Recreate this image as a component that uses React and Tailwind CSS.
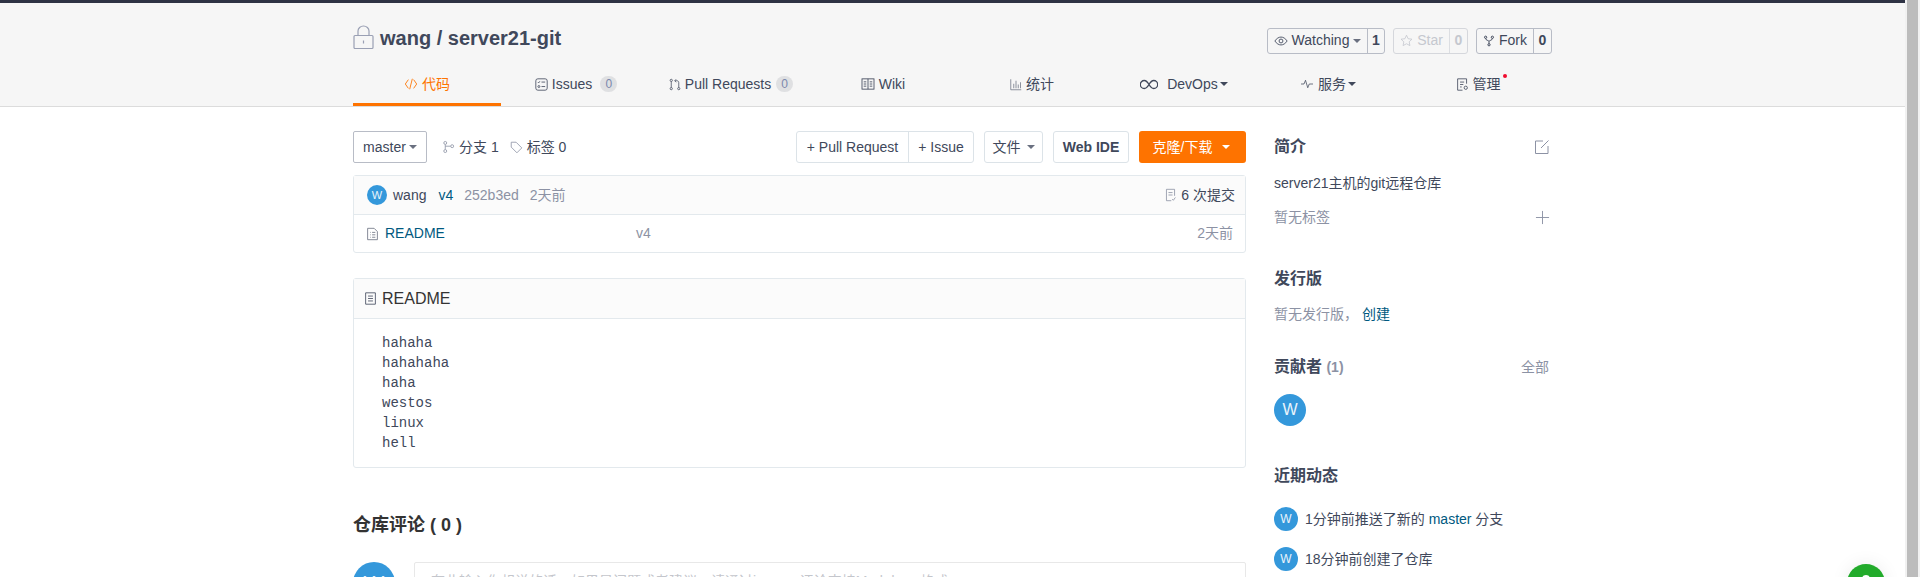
import React from "react";

const S = ({ className = "", w = 14, h = 14, vb = "0 0 16 16", children, color = "currentColor", sw = 1 }) => (
  <svg width={w} height={h} viewBox={vb} fill="none" stroke={color} strokeWidth={sw} className={"shrink-0 " + className}>{children}</svg>
);

const Caret = ({ className = "" }) => (
  <span className={"inline-block w-0 h-0 border-x-[4px] border-x-transparent border-t-[4px] border-t-current " + className} />
);

const Avatar = ({ size, text, className = "" }) => (
  <span className={"flex shrink-0 items-center justify-center rounded-full bg-[#3498db] text-[#eaf4fb] " + size + " " + text + " " + className}>W</span>
);

function Tab({ children, active, className = "" }) {
  return (
    <div className={"w-[148px] h-[44px] pt-[3px] flex shrink-0 items-center justify-center gap-1 text-[14px] whitespace-nowrap border-b-[3px] " + (active ? "border-[#fe7300] text-[#fe7300] " : "border-transparent text-[#40485b] ") + className}>
      {children}
    </div>
  );
}

const Count = ({ children, className = "ml-1" }) => (
  <span className={"h-[16px] min-w-[17px] px-[5px] rounded-full bg-[#dfe0e2] text-[#7b88ad] text-[12px] leading-[16px] text-center " + className}>{children}</span>
);

function Social({ icon, label, count, caret, disabled, w1, w2 }) {
  return (
    <div className={"flex h-[26px] border rounded-[3px] text-[14px] " + (disabled ? "border-[#d5d7dc] text-[#c5c8cf]" : "border-[#b8bcc6] text-[#40485b]")}>
      <span className={"flex items-center justify-center gap-1 " + w1}>{icon}{label}{caret && <Caret className="text-[#6a7080]" />}</span>
      <span className={"flex items-center justify-center border-l font-bold text-[14px] " + w2 + " " + (disabled ? "border-[#dcdee2]" : "border-[#b8bcc6]")}>{count}</span>
    </div>
  );
}

const SideTitle = ({ children, className = "" }) => (
  <div className={"text-[16px] leading-[20px] font-bold text-[#40485b] " + className}>{children}</div>
);

export default function App() {
  return (
    <div className="relative flex h-[577px] overflow-hidden bg-white text-[14px] text-[#40485b] font-['Liberation_Sans','Noto_Sans_CJK_SC',sans-serif]">
      <div className="w-[1905px] shrink-0">
        <div className="h-[3px] bg-[#2e3344]" />
        <header className="h-[104px] bg-[#f6f6f6] border-b border-[#dcdcdc]">
          <div className="w-[1200px] ml-[353px] h-full flex flex-col">
            <div className="flex items-center justify-between h-[59px] pt-[10px]">
              <div className="flex items-center gap-[6px]">
                <S w={21} h={25} vb="0 0 21 24" color="#9aa0b4" sw={1.2}>
                  <rect x="1" y="10" width="19" height="13" rx="1" />
                  <path d="M5 10V5.500a5.500 5 0 0 1 11 0V10M10.500 15v3" />
                </S>
                <span className="text-[20px] font-bold leading-[26px] text-[#40485b]">wang / server21-git</span>
              </div>
              <div className="flex gap-2 mr-[1px] mt-[6px]">
                <Social w1="w-[99px]" w2="w-[17px]" label="Watching" count="1" caret icon={
                  <S w={14} h={12} vb="0 0 16 12" color="#40485b"><path d="M1 6c2-3 4.500-4.500 7-4.500S13 3 15 6c-2 3-4.500 4.500-7 4.500S3 9 1 6z" /><circle cx="8" cy="6" r="2.200" /></S>
                } />
                <Social disabled w1="w-[55px]" w2="w-[18px]" label="Star" count="0" icon={
                  <S w={13} h={13} color="#c5c8cf"><path d="M8 1.500l2 4.300 4.700.6-3.400 3.200.9 4.700L8 12l-4.200 2.300.9-4.700L1.300 6.400 6 5.800z" /></S>
                } />
                <Social w1="w-[56px]" w2="w-[18px]" label="Fork" count="0" icon={
                  <S w={12} h={12} color="#40485b" sw={1.300}><circle cx="3.500" cy="3" r="1.500" /><circle cx="12.500" cy="3" r="1.500" /><circle cx="8" cy="13" r="1.500" /><path d="M3.500 4.500c0 3 4.500 2.500 4.500 4v3M12.500 4.500c0 3-4.500 2.500-4.500 4" /></S>
                } />
              </div>
            </div>
            <nav className="flex">
              <Tab active>
                <S w={14} h={14} color="#fe7300"><path d="M5 3L1.500 8 5 13M11 3l3.500 5L11 13M9.500 2L6.500 14" /></S>
                代码
              </Tab>
              <Tab className="ml-[1px]">
                <S w={13} h={13} color="#40485b"><rect x="1" y="1" width="14" height="14" rx="2.500" /><path d="M8 5h4.500M8 10.500h4.500" /><path d="M3.500 5l1 1 1.500-2" /><circle cx="4.800" cy="10.500" r="1.200" /></S>
                Issues<Count>0</Count>
              </Tab>
              <Tab className="ml-[7px]">
                <S w={12} h={13} color="#40485b"><circle cx="3" cy="2.500" r="1.500" /><circle cx="3" cy="13.500" r="1.500" /><circle cx="13" cy="13.500" r="1.500" /><path d="M3 4v8M13 12V5.500c0-1.500-1-2.500-2.500-2.500H8M9.500 1L7.500 3l2 2" /></S>
                Pull Requests<Count className="ml-[1px]">0</Count>
              </Tab>
              <Tab className="ml-[4px]">
                <S w={14} h={12} vb="0 0 16 14" color="#40485b"><rect x="1" y="1" width="14" height="12" /><path d="M8 1v12M3 4.500h3M3 7h3M3 9.500h3M10 4.500h3M10 7h3M10 9.500h3" /></S>
                Wiki
              </Tab>
              <Tab className="ml-[1px]">
                <S w={12} h={13} color="#6a7080"><path d="M1 1v14h14M5 13V7M8 13V3M11 13V8M14 13V5" /></S>
                统计
              </Tab>
              <Tab className="ml-[4px]">
                <S w={18} h={11} vb="0 0 18 11" color="#40485b" sw={1.300}><path d="M9 5.500C7.500 3 6 1.500 4.300 1.500a4 4 0 0 0 0 8C6 9.500 7.500 8 9 5.500c1.500-2.500 3-4 4.700-4a4 4 0 0 1 0 8C12 9.500 10.500 8 9 5.500z" /></S>
                <span className="ml-[5px]">DevOps</span><Caret className="-ml-[2px]" />
              </Tab>
              <Tab className="-ml-[4px]">
                <S w={14} h={12} color="#40485b"><path d="M0 8h4l2-5 3 10 2-5h5" /></S>
                服务<Caret className="-ml-[2px]" />
              </Tab>
              <Tab className="ml-[2px]">
                <S w={13} h={15} color="#40485b"><path d="M13 7V1H2v14h6M5 5h5M5 8h4M5 11h2" /><circle cx="12" cy="12" r="2" /></S>
                <span className="relative">管理<span className="absolute -right-[6px] top-[0px] w-[4px] h-[4px] rounded-full bg-[#f00b2e]" /></span>
              </Tab>
            </nav>
          </div>
        </header>

        <main className="w-[1200px] ml-[353px] flex gap-[28px] pt-[24px]">
          <div className="w-[893px] shrink-0">
            <div className="flex items-center h-[32px]">
              <div className="flex items-center gap-[3px] w-[74px] h-[32px] justify-center border border-[#b8bcc6] rounded-[2px] text-[#40485b]">master<Caret className="text-[#6a7080]" /></div>
              <div className="flex items-center gap-1 ml-[15px]">
                <S w={13} h={14} color="#8c92a4"><circle cx="4" cy="3" r="1.800" /><circle cx="4" cy="13" r="1.800" /><circle cx="12.500" cy="7" r="1.800" /><path d="M4 5v6M4 7h6.500" /></S>
                分支 1
              </div>
              <div className="flex items-center gap-1 ml-[11px]">
                <S w={13} h={13} color="#8c92a4"><path d="M1.500 1.500h6l7 7-6 6-7-7zM5 5h.2" /></S>
                标签 0
              </div>
              <div className="ml-auto flex items-center h-[32px] gap-[10px]">
                <div className="flex h-full border border-[#dce3e8] rounded-[3px]">
                  <span className="w-[112px] flex items-center justify-center border-r border-[#dce3e8]">+ Pull Request</span>
                  <span className="w-[64px] flex items-center justify-center">+ Issue</span>
                </div>
                <div className="flex items-center justify-center gap-[6px] h-full w-[59px] border border-[#dce3e8] rounded-[3px]">文件<Caret className="text-[#6a7080]" /></div>
                <div className="flex items-center justify-center h-full w-[76px] border border-[#dce3e8] rounded-[3px] font-bold">Web IDE</div>
                <div className="flex items-center justify-center gap-[9px] h-full w-[107px] pr-[2px] rounded-[3px] bg-[#fe7300] text-white">克隆/下载<Caret className="ml-[1px]" /></div>
              </div>
            </div>

            <div className="mt-[12px] border border-[#e3e9ed] rounded-[3px]">
              <div className="h-[39px] flex items-center bg-[#fbfbfb] border-b border-[#e3e9ed] pl-[13px] pr-[10px] text-[14px]">
                <Avatar size="w-[20px] h-[20px]" text="text-[11px]" />
                <span className="ml-[6px] text-[#40485b]">wang</span>
                <span className="ml-[12px] text-[#005980]">v4</span>
                <span className="ml-[11px] text-[#8c92a4]">252b3ed</span>
                <span className="ml-[11px] text-[#8c92a4]">2天前</span>
                <span className="ml-auto flex items-center gap-1 text-[#40485b]">
                  <S w={13} h={14} color="#8c92a4"><path d="M13 9V1H3v14h6M5.500 5h5M5.500 8h5M10 13l1.500 1.500L14 11" /></S>
                  6 次提交
                </span>
              </div>
              <div className="h-[37px] flex items-center pl-[12px] pr-[12px] text-[14px]">
                <S w={13} h={14} color="#6a7080"><path d="M2 1h8l4 4v10H2zM5 6h.8M7.500 6h4M5 9h.8M7.500 9h4M5 12h.8M7.500 12h4" /></S>
                <span className="ml-[6px] w-[251px] text-[#005980]">README</span>
                <span className="text-[#8c92a4]">v4</span>
                <span className="ml-auto text-[#8c92a4]">2天前</span>
              </div>
            </div>

            <div className="mt-[25px] border border-[#e3e9ed] rounded-[3px] h-[190px]">
              <div className="h-[40px] flex items-center gap-[5px] bg-[#fbfbfb] border-b border-[#e3e9ed] pl-[10px] text-[16px] text-[#333]">
                <S w={13} h={15} color="#40485b"><path d="M2 1h12v14H2zM5 5h6M5 8h6M5 11h6" /></S>
                README
              </div>
              <pre className="pl-[28px] pt-[14px] text-[14px] leading-[20px] text-[#40485b] font-['Liberation_Mono',monospace]">{"hahaha\nhahahaha\nhaha\nwestos\nlinux\nhell"}</pre>
            </div>

            <div className="mt-[45px] text-[18px] leading-[24px] font-bold text-[#333]">仓库评论 ( 0 )</div>

            <div className="mt-[25px] flex gap-[19px]">
              <Avatar size="w-[42px] h-[42px]" text="text-[22px]" />
              <div className="flex-1 h-[100px] border border-[#e8e8e8] rounded-[2px] pl-[16px] pt-[8px] text-[14px] text-[#c4c6cc]">
                在此输入你想说的话，如果是问题或者建议，请通过issue，评论支持Markdown格式
              </div>
            </div>
          </div>

          <aside className="w-[278px] shrink-0">
            <div className="flex items-center justify-between h-[20px] mt-[6px]">
              <SideTitle>简介</SideTitle>
              <S w={16} h={16} color="#8c92a4" className="mr-[2px]"><path d="M9 2H1.500v12.500H14V7M7 9L14.500 1.500" /></S>
            </div>
            <div className="mt-[16px] leading-[20px] text-[14px]">server21主机的git远程仓库</div>
            <div className="mt-[14px] flex items-center justify-between leading-[20px] text-[#8c92a4]">
              暂无标签
              <S w={15} h={15} color="#8c92a4" className="mr-[2px]"><path d="M8 1v14M1 8h14" /></S>
            </div>
            <SideTitle className="mt-[42px]">发行版</SideTitle>
            <div className="mt-[15px] leading-[20px] text-[#8c92a4]">暂无发行版， <span className="text-[#005980]">创建</span></div>
            <div className="mt-[33px] flex items-center justify-between h-[20px] pr-[3px]">
              <SideTitle>贡献者 <span className="font-bold text-[14px] text-[#8c92a4]">(1)</span></SideTitle>
              <span className="text-[#8c92a4] text-[14px]">全部</span>
            </div>
            <Avatar size="w-[32px] h-[32px]" text="text-[16px]" className="mt-[17px]" />
            <SideTitle className="mt-[40px]">近期动态</SideTitle>
            <div className="mt-[21px] flex items-center gap-[7px] h-[24px]">
              <Avatar size="w-[24px] h-[24px]" text="text-[12px]" />
              <span>1分钟前推送了新的 <span className="text-[#005980]">master</span> 分支</span>
            </div>
            <div className="mt-[16px] flex items-center gap-[7px] h-[24px]">
              <Avatar size="w-[24px] h-[24px]" text="text-[12px]" />
              <span>18分钟前创建了仓库</span>
            </div>
          </aside>
        </main>
      </div>

      <div className="flex-1 bg-[#f1f1f1] pl-[2px] pr-[2px]">
        <div className="h-full bg-[#bcbcbc]" />
      </div>

      <div className="absolute left-[1847px] top-[564px] w-[38px] h-[38px] rounded-full bg-[#22ab2b] shadow-[0_0_18px_rgba(0,0,0,0.08)] flex justify-center pt-[11px]">
        <span className="w-[8px] h-[8px] rounded-full border-2 border-white" />
      </div>
    </div>
  );
}
